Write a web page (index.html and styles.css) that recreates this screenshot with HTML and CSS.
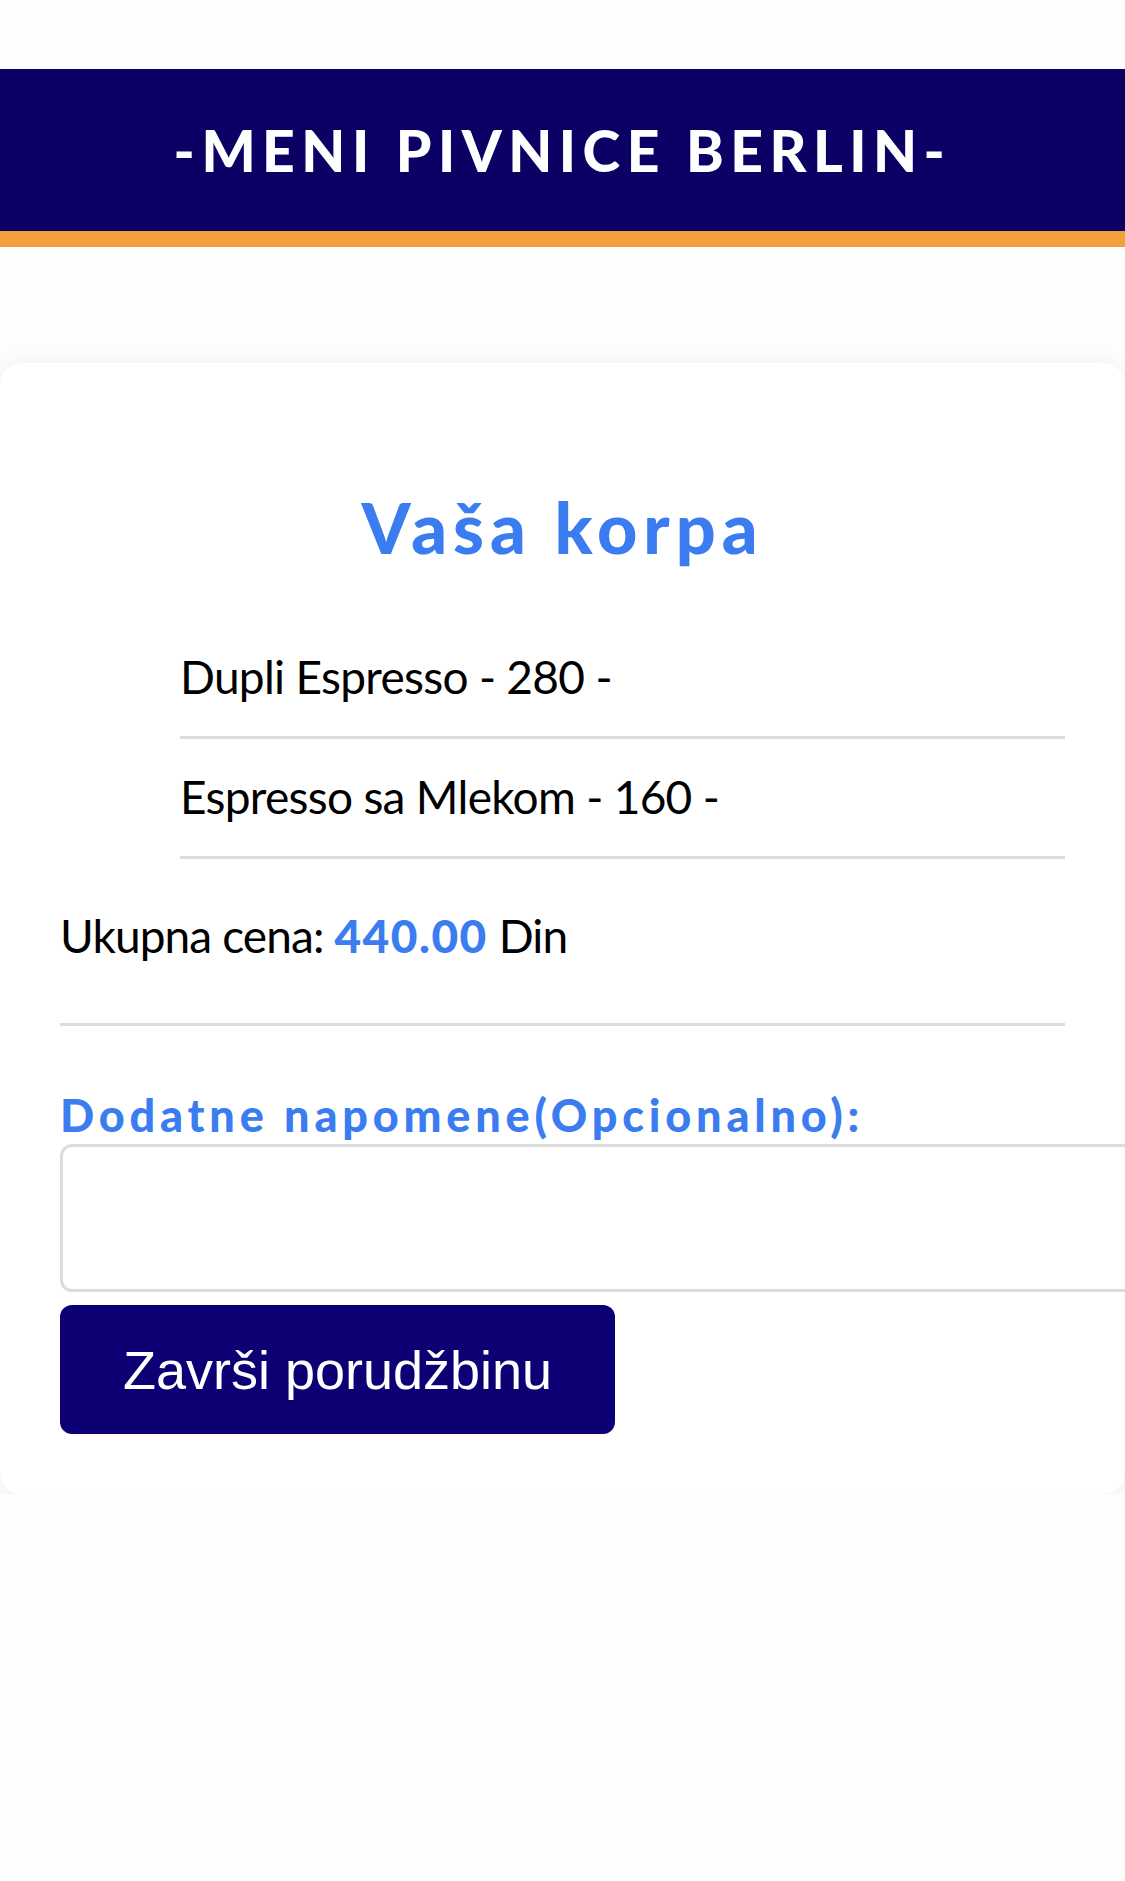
FILE: index.html
```html
<!DOCTYPE html>
<html lang="sr">
<head>
<meta charset="utf-8">
<title>Meni Pivnice Berlin - Korpa</title>
<link rel="stylesheet" href="styles.css">
</head>
<body>
<header class="site-header">
  <h1 class="site-title">-MENI PIVNICE BERLIN-</h1>
</header>
<main class="cart-card">
  <h2 class="cart-title">Vaša korpa</h2>
  <ul class="cart-list">
    <li class="cart-item">Dupli Espresso - 280 -</li>
    <li class="cart-item">Espresso sa Mlekom - 160 -</li>
  </ul>
  <p class="cart-total">Ukupna cena: <span class="total-value">440.00</span> Din</p>
  <hr class="divider">
  <label class="notes-label" for="notes">Dodatne napomene(Opcionalno):</label>
  <textarea id="notes" class="notes-input"></textarea>
  <button class="submit-btn" type="button">Završi porudžbinu</button>
</main>
</body>
</html>
```
FILE: styles.css
```css
html, body {
  margin: 0;
  padding: 0;
  background: #fefefe;
}
body {
  font-family: Lato, "Open Sans", sans-serif;
  color: #000;
  padding-top: 69px;
}
.site-header {
  background: #0b0064;
  border-bottom: 16px solid #f29f3c;
  height: 162px;
  display: flex;
  align-items: center;
  justify-content: center;
}
.site-title {
  margin: 0;
  color: #fff;
  font-family: Lato, sans-serif;
  font-weight: 900;
  font-size: 57px;
  letter-spacing: 6.5px;
  line-height: 1;
}
.cart-card {
  margin-top: 116px;
  background: #fff;
  border-radius: 22px;
  box-shadow: 0 2px 30px rgba(0, 0, 0, 0.08);
  padding: 122px 60px 60px;
  display: flex;
  flex-direction: column;
  align-items: flex-start;
}
.cart-title {
  align-self: stretch;
  margin: 0;
  text-align: center;
  color: #3b7cf0;
  font-weight: 900;
  font-size: 70px;
  letter-spacing: 6px;
  line-height: 84px;
}
.cart-list {
  list-style: none;
  margin: 50px 0 0 120px;
  padding: 0;
  align-self: stretch;
}
.cart-item {
  font-size: 46px;
  line-height: 55px;
  letter-spacing: -0.7px;
  padding: 30px 0 32px;
  border-bottom: 3px solid #dcdcdc;
}
.cart-total {
  margin: 49px 0 0;
  font-size: 46px;
  line-height: 55px;
  letter-spacing: -0.9px;
}
.total-value {
  color: #3b7cf0;
  font-weight: 900;
  letter-spacing: 1.5px;
}
.divider {
  align-self: stretch;
  margin: 60px 0 0;
  border: 0;
  border-top: 3px solid #dcdcdc;
  height: 0;
}
.notes-label {
  margin-top: 62px;
  color: #3b7cf0;
  font-weight: 900;
  font-size: 45px;
  letter-spacing: 4.8px;
  line-height: 54px;
}
.notes-input {
  margin: 0;
  margin-top: 2px;
  width: 1080px;
  height: 148px;
  box-sizing: border-box;
  border: 3px solid #dcdcdc;
  border-radius: 12px;
  resize: none;
  background: #fff;
}
.submit-btn {
  margin-top: 13px;
  width: 555px;
  height: 129px;
  border: 0;
  border-radius: 12px;
  background: #0c0074;
  color: #fff;
  font-family: "Liberation Sans", Arial, sans-serif;
  font-size: 54px;
  padding: 0;
  text-align: center;
}
```
